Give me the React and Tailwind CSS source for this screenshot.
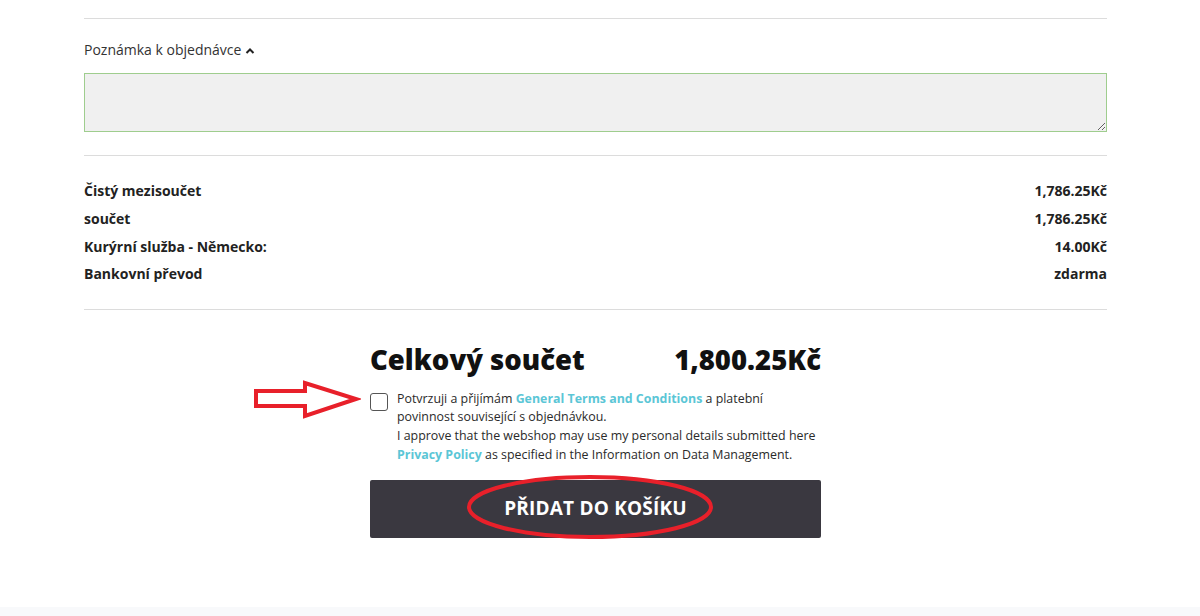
import React from "react";

const rows = [
  { label: "Čistý mezisoučet", value: "1,786.25Kč" },
  { label: "součet", value: "1,786.25Kč" },
  { label: "Kurýrní služba - Německo:", value: "14.00Kč" },
  { label: "Bankovní převod", value: "zdarma" },
];

function App() {
  return (
    <div className="w-full h-[616px] bg-white flex flex-col font-['Open_Sans',sans-serif] text-[#222]">
      <div className="flex-1">
        <div className="w-[1023px] ml-[84px] pt-[18px]">
          <div className="border-t border-[#dcdcdc]" />

          {/* Order note */}
          <div className="pt-[21px] flex items-center gap-1 text-[14px] text-[#333] leading-[20px]">
            <span>Poznámka k objednávce</span>
            <svg width="10" height="8" viewBox="0 0 10 8" className="mt-[2px]">
              <path d="M1.5 6 L5 2.5 L8.5 6" fill="none" stroke="#222" strokeWidth="2" />
            </svg>
          </div>
          <textarea className="mt-[13px] block w-full h-[59px] bg-[#f0f0f0] border border-[#9fcd8e] outline-none" />

          <div className="mt-[23px] border-t border-[#dcdcdc]" />

          {/* Totals */}
          <div className="pt-[21px] pb-[21px] flex flex-col">
            {rows.map((r) => (
              <div key={r.label} className="flex justify-between h-[27.7px] items-center text-[14px] font-bold text-[#222]">
                <span>{r.label}</span>
                <span>{r.value}</span>
              </div>
            ))}
          </div>

          <div className="border-t border-[#dcdcdc]" />

          {/* Checkout block */}
          <div className="w-[451px] mx-auto pt-[30px]">
            <div className="flex justify-between items-center text-[27.5px] font-extrabold text-[#111] leading-[40px]">
              <span>Celkový součet</span>
              <span>1,800.25Kč</span>
            </div>

            <div className="relative mt-[10px] flex gap-[9px] text-[12.4px] leading-[18.7px] text-[#2a2a2a]">
              <div className="shrink-0 mt-[3px] w-[18px] h-[18px] border border-[#555] rounded-[3px] bg-white" />
              <p>
                Potvrzuji a přijímám{" "}
                <span className="font-bold text-[#5bc6d6]">General Terms and Conditions</span> a platební
                <br />
                povinnost související s objednávkou.
                <br />
                I approve that the webshop may use my personal details submitted here
                <br />
                <span className="font-bold text-[#5bc6d6]">Privacy Policy</span> as specified in the Information on Data Management.
              </p>

              {/* red annotation: arrow */}
              <svg className="absolute left-[-117px] top-[-11px]" width="108" height="42" viewBox="0 0 108 42">
                <path
                  d="M3 12 L52 12 L52 4 L103 20 L52 37 L52 27 L3 27 Z"
                  fill="none"
                  stroke="#e8202a"
                  strokeWidth="4"
                  strokeLinejoin="miter"
                />
              </svg>
            </div>

            <div className="relative mt-[15px]">
              <button className="w-full h-[58px] bg-[#3a3840] rounded-[2px] text-white text-[19px] font-bold tracking-[0.2px]">
                PŘIDAT DO KOŠÍKU
              </button>

              {/* red annotation: ellipse */}
              <svg className="absolute left-[96px] top-[-6px] pointer-events-none" width="248" height="66" viewBox="0 0 248 66">
                <ellipse cx="124" cy="33" rx="121" ry="30" fill="none" stroke="#e8202a" strokeWidth="4" />
              </svg>
            </div>
          </div>
        </div>
      </div>
      <div className="h-[9px] bg-[#f8f9fb]" />
    </div>
  );
}

export default App;
